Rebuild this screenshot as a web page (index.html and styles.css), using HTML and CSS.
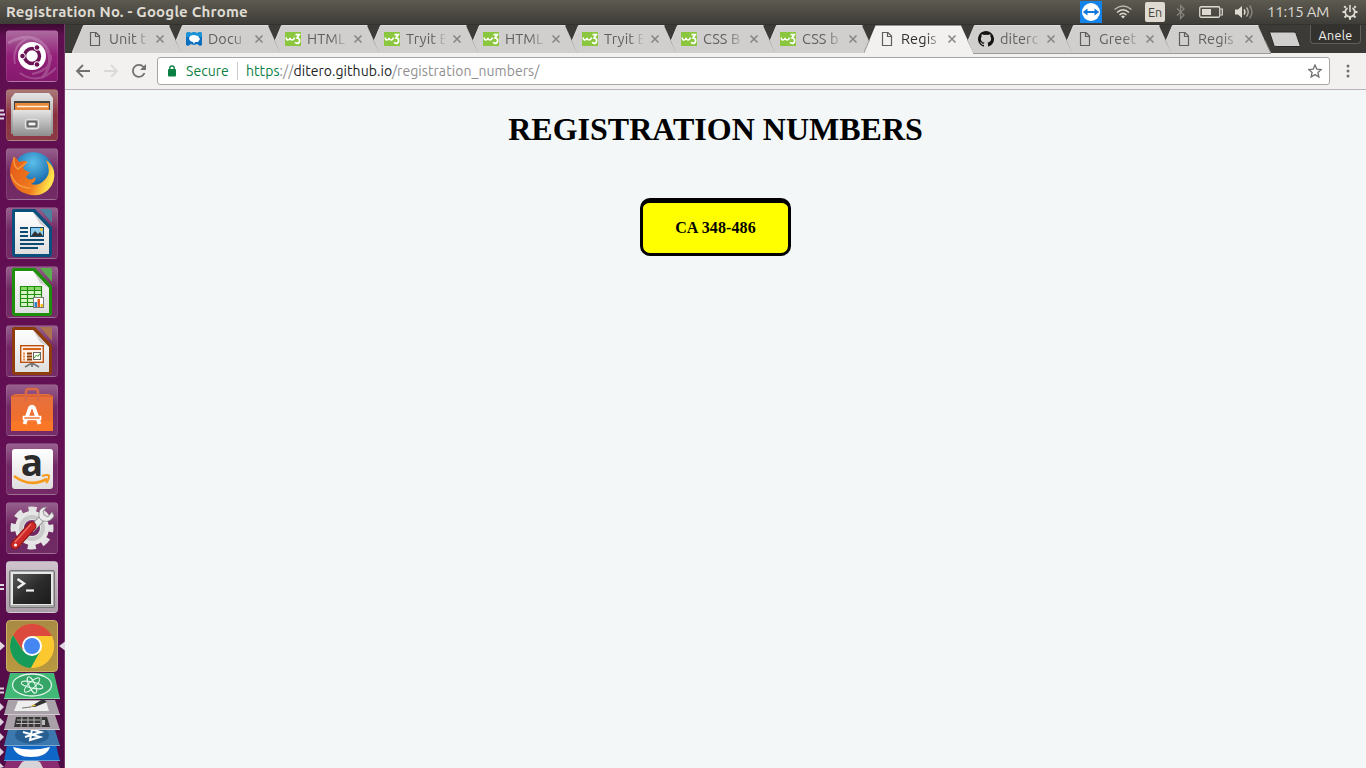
FILE: index.html
```html
<!DOCTYPE html>
<html lang="en">
<head>
<meta charset="utf-8">
<title>Registration No.</title>
<link rel="stylesheet" href="styles.css">
</head>
<body>
<svg class="defs" width="0" height="0">
  <defs>
    <linearGradient id="silver" x2="0" y2="1"><stop offset="0" stop-color="#e4e4e4"/><stop offset="1" stop-color="#8e8e8e"/></linearGradient>
    <linearGradient id="paper" x2="0" y2="1"><stop offset="0" stop-color="#fff"/><stop offset="1" stop-color="#dedede"/></linearGradient>
    <linearGradient id="orange" x2="0" y2="1"><stop offset="0" stop-color="#e5703f"/><stop offset="1" stop-color="#f56f25"/></linearGradient>
    <linearGradient id="fox" x1="0" x2="1" y2=".3"><stop offset="0" stop-color="#e3591c"/><stop offset=".65" stop-color="#f07a1c"/><stop offset="1" stop-color="#ffe14a"/></linearGradient>
    <radialGradient id="globe" cx=".5" cy=".25" r=".8"><stop offset="0" stop-color="#5cc0ea"/><stop offset=".6" stop-color="#1b6fb0"/><stop offset="1" stop-color="#123a75"/></radialGradient>
    <linearGradient id="screen" x2="1" y2="1"><stop offset="0" stop-color="#5a5a5a"/><stop offset=".5" stop-color="#2b2b2b"/><stop offset="1" stop-color="#1c1c1c"/></linearGradient>
  </defs>
  <symbol id="tab-mid" viewBox="0 0 110 29"><path d="M11.500 .5H97L109.500 28H10L5 16Z" fill="#d0cfce"/><path d="M10 28.500H110" stroke="#9d9b99"/><path d="M5 16L11.500 .5H97.500" fill="none" stroke="#dddcdb"/><path d="M103.500 15L110 28.500" stroke="#9b9997" fill="none"/></symbol>
  <symbol id="tab-first" viewBox="0 0 110 29"><path d="M0 28L11.500 .5H97L109.500 28Z" fill="#d0cfce"/><path d="M0 28.500H110" stroke="#9d9b99"/><path d="M0 28L11.500 .5H97.500" fill="none" stroke="#dddcdb"/><path d="M103.500 15L110 28.500" stroke="#9b9997" fill="none"/></symbol>
  <symbol id="tab-active" viewBox="0 0 110 29"><path d="M0 29L5 16 11.500 .5H97L110 29Z" fill="#f2f1f0"/><path d="M-.5 28.500L5.500 15M103.500 15L110 28.500" stroke="#9b9997" fill="none"/></symbol>
  <symbol id="page" viewBox="0 0 16 16"><path d="M3.500 1.500H9L12.500 5V14.500H3.500ZM8.500 1.500V5.500H12.500" fill="none" stroke="#5f5e5d" stroke-width="1.200"/></symbol>
  <symbol id="w3" viewBox="0 0 16 16"><rect y="1" width="16" height="14" fill="#8ac63e"/><path d="M1 6.500Q1.500 9 3 9Q4.600 9 5 6.800Q5.400 9 7 9Q8.800 9 9.500 6.500" fill="none" stroke="#fff" stroke-width="1.500"/><path d="M10.500 3.600H14.300L12 7Q14.900 7.200 14.600 10Q14.200 12.400 12.200 12.400Q10.800 12.400 10.200 11.200" fill="none" stroke="#fff" stroke-width="1.700"/></symbol>
  <symbol id="close" viewBox="0 0 10 10"><path d="M1.500 1.500L8.500 8.500M8.500 1.500L1.500 8.500" stroke="#858483" stroke-width="1.500"/></symbol>
  <symbol id="doc" viewBox="0 0 52 52"><path d="M8 2H29L46 20V47Q46 50 43 50H9Q6 50 6 47V4Q6 2 8 2Z" fill="currentColor"/><path d="M34 2H44Q46 2 46 4V16Z" fill="currentColor"/><path d="M34 2H44Q46 2 46 4V16Z" fill="#fff" opacity=".28"/><path d="M9 5H27L43 22V47H9Z" fill="url(#paper)"/><path d="M27 5L43 22L34 17Z" fill="#cfcfcf"/></symbol>
</svg>

<header class="panel">
  <span class="panel-title">Registration No. - Google Chrome</span>
  <div class="tray">
    <svg class="tv" width="22" height="22" viewBox="0 0 22 22"><rect width="22" height="22" fill="#1483ea"/><circle cx="11" cy="11" r="9" fill="#fff"/><path d="M2.800 11L7.500 7.500V10H14.500V7.500L19.200 11L14.500 14.500V12H7.500V14.500Z" fill="#1278dc"/></svg>
    <svg class="wifi" width="18" height="14" viewBox="0 0 18 14"><g fill="none" stroke="#dfdbd2" stroke-width="1.500"><path d="M.5 4.500Q9-2.500 17.500 4.500" opacity=".75"/><path d="M3 7.500Q9 2 15 7.500"/><path d="M5.500 10Q9 6.500 12.500 10"/></g><path d="M7 11.500Q9 9.500 11 11.500L9 13.500Z" fill="#dfdbd2"/></svg>
    <span class="lang">En</span>
    <svg class="bt" width="9" height="16" viewBox="0 0 9 16"><path d="M1 4.500L8 11L4.500 14.500V1.500L8 5L1 11.500" fill="none" stroke="#89867e" stroke-width="1.200"/></svg>
    <svg class="bat" width="24" height="12" viewBox="0 0 24 12"><rect x=".75" y=".75" width="20" height="10.500" rx="1.500" fill="none" stroke="#dfdbd2" stroke-width="1.300"/><path d="M3 3H12V9H3Z" fill="#dfdbd2"/><path d="M21.500 3H23.300V9H21.500" fill="none" stroke="#dfdbd2" stroke-width="1.200"/></svg>
    <svg class="vol" width="19" height="16" viewBox="0 0 19 16"><path d="M0 5.500H3L7 2V14L3 10.500H0Z" fill="#dfdbd2"/><g fill="none" stroke="#dfdbd2" stroke-width="1.400"><path d="M9 5.500Q11 8 9 10.500"/><path d="M11.500 3.500Q15 8 11.500 12.500" opacity=".7"/><path d="M14.500 1.500Q19.500 8 14.500 14.500" opacity=".4"/></g></svg>
    <span class="clock">11:15 AM</span>
    <svg class="gear" width="16" height="16" viewBox="0 0 16 16"><g fill="none" stroke="#dfdbd2"><path d="M5.500 3.900A4.800 4.800 0 1 0 10.500 3.900" stroke-width="1.800"/><path d="M8 1V8" stroke-width="1.600"/><path d="M3.800 3.800L2.200 2.200M12.200 3.800L13.800 2.200M3 8H.5M13 8H15.500M4.300 11.700L2.500 13.500M11.700 11.700L13.500 13.500M8 13V15.700" stroke-width="2"/></g></svg>
  </div>
</header>

<div class="desktop">
  <nav class="launcher">
    <div class="tile dash"><svg viewBox="0 0 52 52"><g fill="none" stroke="#fff" opacity=".2"><path d="M2 13Q26 0 40 17Q49 33 36 48" stroke-width="3"/><path d="M9 34Q5 14 25 7M45 25Q46 40 26 44M14 43Q32 56 50 38" stroke-width="2"/></g><circle cx="26" cy="26" r="14" fill="#fff"/><circle cx="26" cy="26" r="7.500" fill="none" stroke="#6b1355" stroke-width="3.500"/><g fill="#6b1355" stroke="#fff"><circle cx="16.500" cy="26" r="2.800"/><circle cx="31" cy="17.500" r="2.800"/><circle cx="31" cy="34.500" r="2.800"/></g></svg></div>
    <div class="tile files"><svg viewBox="0 0 52 52"><path d="M9 4H43L47 9V45H5V9Z" fill="url(#silver)"/><rect x="8" y="12" width="36" height="12" fill="#444"/><rect x="9" y="14" width="34" height="9" fill="#e98739"/><path d="M11 17.500H42" stroke="#fff2d9" stroke-width="1.500"/><rect x="7" y="21" width="38" height="26" rx="1" fill="url(#silver)"/><rect x="19.500" y="30.500" width="13" height="9" rx="2" fill="#8a8a8a" stroke="#ddd" stroke-width="1.500"/><rect x="22" y="33" width="8" height="4" fill="#f5f5f5" stroke="#444"/></svg></div>
    <div class="tile"><svg viewBox="0 0 52 52"><circle cx="27" cy="25" r="21" fill="url(#globe)"/><path d="M8 9Q11 10 13 14Q19 12 21 14L17 20Q20 24 24 24L20 29Q24 34 29 29Q31 33 25 36Q34 39 41 29Q45 23 40 12Q46 16 48 23Q50 34 42 42Q33 50 21 46Q9 43 5 31Q2 20 8 9Z" fill="url(#fox)"/><path d="M8 9Q7 18 12 21L21 14M5 26Q9 40 25 40" fill="none" stroke="#f69a3c" stroke-width="1.500"/></svg></div>
    <div class="tile writer"><svg viewBox="0 0 52 52"><use href="#doc"/><path d="M14 21H22M14 25H22M14 29H22M14 33H38M14 37H38M14 41H32" stroke="#0c4a72" stroke-width="2"/><rect x="24.500" y="20.500" width="13" height="9" fill="#8fcbed" stroke="#0c4a72"/><path d="M25 29L29 24L32 27L34 25L37 29Z" fill="#333"/><circle cx="35.500" cy="22.500" r="1.600" fill="#f7c72c"/></svg></div>
    <div class="tile calc"><svg viewBox="0 0 52 52"><use href="#doc"/><rect x="14" y="20" width="22" height="21" fill="#d9f5c8"/><path d="M14 20H36V24H14Z" fill="#8bd96b"/><path d="M14.500 20.500H35.500V40.500H14.500ZM14 24.500H36M14 28.500H36M14 32.500H36M14 36.500H36M21.500 20V41M28.500 20V41" fill="none" stroke="#1f8f0d" stroke-width="1.200"/><rect x="27.500" y="31.500" width="10" height="10" fill="#fff" stroke="#777"/><path d="M28.500 36H31V41H28.500Z" fill="#2684c8"/><path d="M31.500 33H34V41H31.500Z" fill="#e25a1c"/><path d="M34.500 38H37V41H34.500Z" fill="#f6c31e"/></svg></div>
    <div class="tile impress"><svg viewBox="0 0 52 52"><use href="#doc"/><path d="M26 38L19 42M26 38L33 42M26 37V42" stroke="#777" stroke-width="1.800"/><rect x="14.700" y="20.700" width="22.600" height="16.600" fill="#fff3e9" stroke="#b9500f" stroke-width="1.400"/><path d="M17 24H35" stroke="#d9631c" stroke-width="2"/><path d="M17 28.500H19M17 31.500H19M17 34.500H19" stroke="#e88a52" stroke-width="2"/><path d="M21 28.500H26M21 31.500H26M21 34.500H26" stroke="#8c3a08" stroke-width="2"/><rect x="27.500" y="27.500" width="7" height="7" fill="#fff" stroke="#666"/><path d="M28 33L30.500 30L32 31.500L34 28.500" stroke="#3a9d22" fill="none"/></svg></div>
    <div class="tile"><svg viewBox="0 0 52 52"><path d="M5 12L9 10H43L47 12V47H5Z" fill="url(#orange)"/><path d="M5 12H47" stroke="#c9572b"/><path d="M5 37H47V47H5Z" fill="#ff7f26" opacity=".5"/><path d="M20 17V8Q20 5 23 5H29Q32 5 32 8V17" fill="none" stroke="#d96a45" stroke-width="2.500"/><path d="M18.500 40L24 24Q26 21.500 28 24L33.500 40" fill="none" stroke="#fff" stroke-width="3.800"/><path d="M17.500 32.500H34.500V35.500H17.500Z" fill="#f57735" stroke="#fff" stroke-width="1.600"/></svg></div>
    <div class="tile"><svg viewBox="0 0 52 52"><rect x="6" y="6" width="41" height="40" rx="3" fill="url(#paper)"/><text x="26" y="33" class="amazon-a" text-anchor="middle">a</text><path d="M8 33Q24 45 41 36" fill="none" stroke="#f79a1c" stroke-width="2.600"/><path d="M36 33Q43 31 43 33Q43 37 40 40" fill="none" stroke="#f79a1c" stroke-width="2"/></svg></div>
    <div class="tile"><svg viewBox="0 0 52 52"><circle cx="26" cy="26" r="18.500" fill="none" stroke="#e3e3e3" stroke-width="6" stroke-dasharray="8 6.530" stroke-dashoffset="4"/><circle cx="26" cy="26" r="12.500" fill="none" stroke="#e6e6e6" stroke-width="9"/><circle cx="26" cy="26" r="11" fill="none" stroke="#c9c9c9" stroke-width="4"/><path d="M25 28L37 15" stroke="#888" stroke-width="7"/><path d="M25 28L37 15" stroke="#e8e8e8" stroke-width="5.500"/><path d="M41 5Q34 5 33 11Q32 17 37 19Q44 21 48 14L46 10L42 15L38 13L37 9Z" fill="#ececec" stroke="#888" stroke-width=".8"/><path d="M26 24L9 43" stroke="#8d1414" stroke-width="9" stroke-linecap="round"/><path d="M26 24L9 43" stroke="#cf2a2a" stroke-width="7" stroke-linecap="round"/><path d="M25 22L9 40" stroke="#ee6d62" stroke-width="1.500"/><circle cx="9.500" cy="43" r="1.500" fill="#fff"/></svg></div>
    <div class="tile terminal"><svg viewBox="0 0 52 52"><rect x="3.500" y="9.500" width="45" height="37" rx="1.500" fill="#aaa" stroke="#777"/><rect x="5" y="11" width="42" height="33" fill="#e7e7e7"/><rect x="7" y="13" width="38" height="30" fill="url(#screen)"/><path d="M11.500 18L18 22.500L11.500 27" fill="none" stroke="#f0f0f0" stroke-width="2.400"/><path d="M20 29.500H28" stroke="#f0f0f0" stroke-width="2.200"/></svg></div>
    <div class="tile chrome"><svg viewBox="0 0 52 52"><circle cx="26" cy="26" r="22" fill="#f7c62f"/><path d="M7 15A22 22 0 0 1 46 16H26L17 31Z" fill="#db4a3c"/><path d="M7 15A22 22 0 0 0 25 48L34.500 31L17 31Z" fill="#179b58"/><path d="M26 16H46Q49 23 47.500 31Q43 47 25 48L34.500 31Z" fill="#fbc92f"/><circle cx="26" cy="26" r="10" fill="#fff"/><circle cx="26" cy="26" r="8" fill="#4587f2"/></svg></div>
    <svg class="stack" width="64" height="96" viewBox="0 0 64 96">
      <path d="M7 87H57L60 96H4Z" fill="#8c2c70"/><path d="M18 96L22 90Q31 85 40 90L43 96Z" fill="#d8d3d6"/>
      <path d="M7 73H56L60 89H4Z" fill="#0e67c6"/><path d="M13 75Q31 80 50 75Q47 85 31 85Q16 85 13 75Z" fill="#fff"/><path d="M4 88.500H60" stroke="#62a1dc"/>
      <path d="M8 58H55L60 74H4Z" fill="#3c78ae"/><ellipse cx="32" cy="63" rx="17" ry="9" fill="#275f92"/><path d="M23 60L40 65L30 68L32 57.500L41 60L25 65" fill="none" stroke="#fff" stroke-width="2"/><path d="M4 73.500H60" stroke="#79a7cf"/>
      <path d="M8 43H55L60 58H4Z" fill="#aaa1a8"/><path d="M16 45H47L50 55H14Z" fill="#383838"/><path d="M17 48H40M16 51.500H40M22 45L21 55M28 45V55M34 45V55M41 45V55" stroke="#b6b3b5"/><path d="M42 48H45V53H42Z" fill="#bbb"/><path d="M4 57.500H60" stroke="#cec8cd"/>
      <path d="M8 28H55L60 43H4Z" fill="#aaa2a9"/><path d="M18 29H46L49 39H14Z" fill="#eee"/><path d="M22 36L31 35" stroke="#777"/><path d="M30 35L43 27L47 30L35 35Z" fill="#333"/><path d="M30 35L34 32L36 34Z" fill="#e3c44f"/><path d="M4 42.500H60" stroke="#d1cbd0"/>
      <path d="M10 1H54L60 27H4Z" fill="#42b877"/><path d="M4 26.500H60" stroke="#84d8a8"/><ellipse cx="32" cy="13" rx="19.500" ry="11" fill="#35a568" stroke="#dff5e8" stroke-width="1.300"/><g fill="none" stroke="#e6f8ed"><ellipse cx="32" cy="13" rx="11" ry="3" transform="rotate(12 32 13)"/><ellipse cx="32" cy="13" rx="9" ry="3" transform="rotate(65 32 13)"/><ellipse cx="32" cy="13" rx="10" ry="3.300" transform="rotate(-42 32 13)"/></g>
      <path d="M0 16.500H4M0 20.500H4" stroke="#ded2dc" stroke-width="2"/><path d="M0 31L4 35L0 39ZM0 46L4 50L0 54ZM0 61L4 65L0 69ZM0 76L4 80L0 84ZM0 91L4 95L0 96Z" fill="#ded2dc"/>
    </svg>
  </nav>

  <section class="browser">
    <div class="tabstrip">
      <ul class="tabs">
        <li class="tab"><svg class="shape"><use href="#tab-first"/></svg><svg class="fav"><use href="#page"/></svg><span class="name">Unit t</span><svg class="x"><use href="#close"/></svg></li>
        <li class="tab"><svg class="shape"><use href="#tab-mid"/></svg><svg class="fav" viewBox="0 0 16 16"><path d="M0 2L3 1 5 2 8 1 11 2 14 1 16 2V14L14 15 11 13 8 14 5 13 2 15 0 14Z" fill="#0b6fc0"/><path d="M0 2L3 1 5 2 8 1 11 2 14 1 16 2V6H0Z" fill="#1993d6"/><path d="M3 7Q4 4 8 4L12 5L14 8L12 11H9L8 13L7 11Q3 10 3 7Z" fill="#fff"/></svg><span class="name">Docu</span><svg class="x"><use href="#close"/></svg></li>
        <li class="tab"><svg class="shape"><use href="#tab-mid"/></svg><svg class="fav"><use href="#w3"/></svg><span class="name">HTML</span><svg class="x"><use href="#close"/></svg></li>
        <li class="tab"><svg class="shape"><use href="#tab-mid"/></svg><svg class="fav"><use href="#w3"/></svg><span class="name">Tryit E</span><svg class="x"><use href="#close"/></svg></li>
        <li class="tab"><svg class="shape"><use href="#tab-mid"/></svg><svg class="fav"><use href="#w3"/></svg><span class="name">HTML</span><svg class="x"><use href="#close"/></svg></li>
        <li class="tab"><svg class="shape"><use href="#tab-mid"/></svg><svg class="fav"><use href="#w3"/></svg><span class="name">Tryit E</span><svg class="x"><use href="#close"/></svg></li>
        <li class="tab"><svg class="shape"><use href="#tab-mid"/></svg><svg class="fav"><use href="#w3"/></svg><span class="name">CSS B</span><svg class="x"><use href="#close"/></svg></li>
        <li class="tab"><svg class="shape"><use href="#tab-mid"/></svg><svg class="fav"><use href="#w3"/></svg><span class="name">CSS b</span><svg class="x"><use href="#close"/></svg></li>
        <li class="tab active"><svg class="shape"><use href="#tab-active"/></svg><svg class="fav"><use href="#page"/></svg><span class="name">Regis</span><svg class="x"><use href="#close"/></svg></li>
        <li class="tab"><svg class="shape"><use href="#tab-mid"/></svg><svg class="fav" viewBox="0 0 16 16"><path fill="#161414" d="M8 0C3.600 0 0 3.600 0 8c0 3.500 2.300 6.500 5.500 7.600.4.100.5-.2.500-.4v-1.400c-2.200.5-2.700-1-2.700-1-.4-.9-.9-1.200-.9-1.200-.7-.5.100-.5.100-.5.800.1 1.200.8 1.200.8.700 1.300 1.900.9 2.300.7.100-.5.300-.9.500-1.100-1.800-.2-3.600-.9-3.600-4 0-.9.300-1.600.8-2.100-.1-.2-.4-1 .1-2.100 0 0 .7-.2 2.200.8a7.500 7.500 0 0 1 4 0c1.500-1 2.200-.8 2.200-.8.400 1.100.200 1.900.1 2.100.5.600.8 1.300.8 2.100 0 3.100-1.900 3.800-3.700 4 .3.200.6.700.6 1.500v2.200c0 .2.100.5.500.4A8 8 0 0 0 8 0Z"/></svg><span class="name">diterc</span><svg class="x"><use href="#close"/></svg></li>
        <li class="tab"><svg class="shape"><use href="#tab-mid"/></svg><svg class="fav"><use href="#page"/></svg><span class="name">Greet</span><svg class="x"><use href="#close"/></svg></li>
        <li class="tab"><svg class="shape"><use href="#tab-mid"/></svg><svg class="fav"><use href="#page"/></svg><span class="name">Regis</span><svg class="x"><use href="#close"/></svg></li>
      </ul>
      <svg class="newtab" width="34" height="17" viewBox="0 0 34 17"><path d="M1.500 1H26Q27.500 1 28 2.500L32.500 15.500H8Q6.500 15.500 6 14.500Z" fill="#d0cfce" stroke="#2a2925"/></svg>
      <span class="profile">Anele</span>
    </div>
    <div class="toolbar">
      <svg class="nav" viewBox="0 0 16 16"><path d="M15 8H2.500M8 2L2 8L8 14" fill="none" stroke="#72716f" stroke-width="1.800"/></svg>
      <svg class="nav" viewBox="0 0 16 16"><path d="M1 8H13.500M8 2L14 8L8 14" fill="none" stroke="#dad9d8" stroke-width="1.800"/></svg>
      <svg class="nav" viewBox="0 0 16 16"><path d="M13.500 10A6 6 0 1 1 12.500 4L14 5.500" fill="none" stroke="#72716f" stroke-width="1.800"/><path d="M15 1V7H9Z" fill="#72716f"/></svg>
      <div class="omnibox">
        <svg class="lock" width="10" height="12" viewBox="0 0 10 12"><rect x="1" y="4" width="8" height="7.500" rx="1" fill="#0b8043"/><path d="M2.800 5V3Q2.800 1 5 1Q7.200 1 7.200 3V5" fill="none" stroke="#0b8043" stroke-width="1.400"/></svg>
        <span class="secure">Secure</span>
        <span class="url"><span class="scheme">https</span><span class="dim">://</span>ditero.github.io<span class="dim">/registration_numbers/</span></span>
        <svg class="star" width="14" height="14" viewBox="0 0 14 14"><path d="M7 1L8.800 5.100L13.300 5.500L9.900 8.500L10.900 13L7 10.600L3.100 13L4.100 8.500L.7 5.500L5.200 5.100Z" fill="none" stroke="#72716f" stroke-width="1.300"/></svg>
      </div>
      <svg class="menu" width="4" height="14" viewBox="0 0 4 14"><circle cx="2" cy="2" r="1.500"/><circle cx="2" cy="7" r="1.500"/><circle cx="2" cy="12" r="1.500"/></svg>
    </div>
    <main class="content">
      <h1>REGISTRATION NUMBERS</h1>
      <div class="plate">CA 348-486</div>
    </main>
  </section>
  <div class="pips"><svg width="65" height="744" viewBox="0 24 65 744"><path d="M0 110.500H4M0 114.500H5M0 118.500H4M0 585H4M0 589H4" stroke="#e2d6e0" stroke-width="2"/><path d="M0 641.500L5 646L0 650.500ZM65 641.500L59 646L65 650.500Z" fill="#e2d6e0"/></svg></div>
</div>
</body>
</html>
```
FILE: styles.css
```css
* { box-sizing: border-box; }
body { margin: 0; width: 1366px; height: 768px; overflow: hidden; display: flex; flex-direction: column; font-family: Ubuntu, "Noto Sans", sans-serif; }
svg { display: block; flex: none; }
.defs { position: absolute; }

.panel { height: 24px; flex: none; display: flex; align-items: center; justify-content: space-between; padding: 0 8px 0 6px; background: linear-gradient(#5d5a50, #3d3c37); color: #dfdbd2; }
.panel-title { font-size: 15px; font-weight: 700; letter-spacing: .2px; line-height: 20px; margin-top: -1px; white-space: nowrap; }
.tray { display: flex; align-items: center; }
.wifi { margin-left: 12px; }
.lang { margin-left: 13px; width: 20px; height: 20px; border-radius: 2px; background: #dfdbd2; color: #45433d; font-size: 12.5px; line-height: 20px; text-align: center; }
.bt { margin-left: 11px; }
.bat { margin-left: 14px; }
.vol { margin-left: 12px; }
.clock { margin-left: 13px; width: 62px; font-size: 15px; letter-spacing: -.2px; line-height: 20px; margin-top: -1px; white-space: nowrap; }
.gear { margin-left: 13px; }

.desktop { position: relative; display: flex; height: 744px; }
.launcher { width: 65px; flex: none; padding: 6px 0 0 6px; background: linear-gradient(#3d0a32, #5f0f50 12px, #630f54 60%, #4f0b45); border-right: 1px solid #7b3a6d; display: flex; flex-direction: column; gap: 7px; }
.tile { width: 52px; height: 52px; flex: none; border-radius: 4px; border: 1px solid rgba(255,255,255,.1); background: linear-gradient(rgba(255,255,255,.34), rgba(255,255,255,.1) 45%, rgba(255,255,255,.12)); }
.tile svg { width: 52px; height: 52px; margin: -1px; overflow: visible; }
.tile.dash { background: linear-gradient(#ab6b9e, #931f79 50%, #861a6e); }
.tile.dash svg { overflow: hidden; }
.files { background: linear-gradient(#a97878, #8b2f3f 50%, #8d3b45); }
.terminal { background: linear-gradient(#cfc3cd, #a99ea8); }
.chrome { background: linear-gradient(#a98a44, #b8983f); border-color: #c9b06b; }
.writer { color: #0b4f7c; }
.calc { color: #1d8f0b; }
.impress { color: #8e3c0c; }
.amazon-a { font: 700 37px "Open Sans", sans-serif; fill: #2b2b2b; }
.stack { margin: -7px 0 0 -6px; }
.pips { position: absolute; left: 0; top: 0; }

.browser { flex: 1; display: flex; flex-direction: column; min-width: 0; }
.tabstrip { height: 29px; flex: none; display: flex; background: #3c3b37; padding-left: 7px; border-top: 1px solid #33322e; }
.tabs { display: flex; margin: 0; padding: 0; list-style: none; width: 1196px; }
.tab { position: relative; display: flex; align-items: center; width: 99px; height: 28px; flex: none; padding-left: 15px; color: #60605f; }
.shape { position: absolute; left: 0; top: 0; width: 110px; height: 29px; }
.fav { position: relative; width: 16px; height: 16px; }
.name { position: relative; width: 39px; margin-left: 6px; white-space: nowrap; font-size: 14.5px; line-height: 20px; letter-spacing: .1px; mask-image: linear-gradient(90deg, #000 65%, transparent 105%); }
.x { position: relative; width: 10px; height: 10px; margin-left: 7px; }
.active { color: #2f2f2f; z-index: 1; }
.tab:nth-child(n+10) { z-index: 2; }
.newtab { margin: 6px 0 0 0; }
.profile { margin: 0 0 0 8px; width: 51px; height: 19px; border: 1px solid #5f5e59; border-top: 0; border-radius: 0 0 4px 4px; background: #33322e; color: #f2f1f0; font-size: 12.5px; letter-spacing: .3px; line-height: 20px; text-align: center; }

.toolbar { position: relative; height: 37px; flex: none; display: flex; align-items: center; padding: 0 16px 1px 10px; background: #f2f1f0; border-bottom: 1px solid #b8b4b8; }
.nav { width: 16px; height: 16px; margin-right: 12px; }
.omnibox { width: 1173px; height: 28px; flex: none; margin-left: -2px; display: flex; align-items: center; padding: 0 7px 0 9px; background: #fff; border: 1px solid #a8a6a5; border-radius: 3px; font-size: 14px; white-space: nowrap; }
.secure { margin-left: 9px; padding-right: 8px; width: 52px; border-right: 1px solid #ccc; line-height: 18px; color: #0b8043; letter-spacing: .05px; }
.url { margin-left: 8px; flex: 1; color: #222; letter-spacing: .06px; }
.scheme { color: #0b8043; }
.dim { color: #8f8f8f; }
.menu { margin-left: 16px; fill: #72716f; }

.content { flex: 1; background: #f3f7f8; display: flex; flex-direction: column; align-items: center; font-family: "Liberation Serif", serif; color: #000; }
h1 { margin: 21px 0 0; font-size: 32px; line-height: 37px; }
.plate { margin-top: 50px; width: 151px; height: 58px; border: 3px solid #000; border-top-width: 5px; border-radius: 10px; background: #ff0; font-size: 16px; font-weight: 700; letter-spacing: .1px; line-height: 49px; text-align: center; }
```
